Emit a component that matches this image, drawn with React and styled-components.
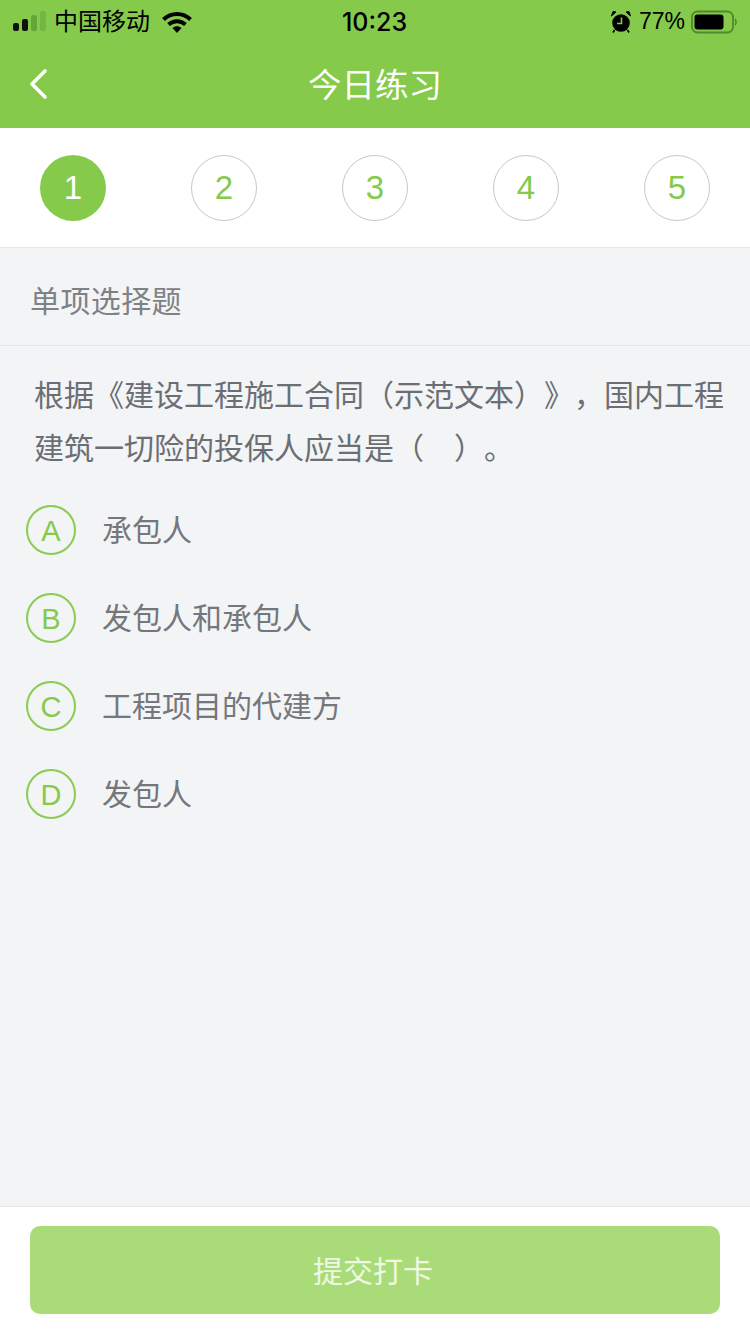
import React from 'react';
import styled, { createGlobalStyle } from 'styled-components';

const steps = [1, 2, 3, 4, 5];
const options = [
  { key: 'A', text: '承包人' },
  { key: 'B', text: '发包人和承包人' },
  { key: 'C', text: '工程项目的代建方' },
  { key: 'D', text: '发包人' },
];

const App = () => {
  return (
    <Page>
      <GlobalStyle />
      <Header>
        <StatusBar>
          <StatusLeft>
            <SignalIcon />
            <Carrier>中国移动</Carrier>
            <WifiIcon />
          </StatusLeft>
          <Clock>10:23</Clock>
          <StatusRight>
            <AlarmIcon />
            <Percent>77%</Percent>
            <BatteryIcon />
          </StatusRight>
        </StatusBar>
        <NavBar>
          <BackButton>
            <svg width="20" height="32" viewBox="0 0 20 32" fill="none">
              <path d="M17 3 L4 16 L17 29" stroke="#fff" strokeWidth="3.6" strokeLinecap="round" strokeLinejoin="round" />
            </svg>
          </BackButton>
          <Title>今日练习</Title>
        </NavBar>
      </Header>
      <Steps>
        {steps.map((n) => (
          <Step key={n} $active={n === 1}>{n}</Step>
        ))}
      </Steps>
      <SectionLabel>单项选择题</SectionLabel>
      <Question>根据《建设工程施工合同（示范文本）》，国内工程建筑一切险的投保人应当是（　）。</Question>
      <OptionList>
        {options.map((o) => (
          <Option key={o.key}>
            <OptionBadge>{o.key}</OptionBadge>
            <OptionText>{o.text}</OptionText>
          </Option>
        ))}
      </OptionList>
      <Footer>
        <SubmitButton>提交打卡</SubmitButton>
      </Footer>
    </Page>
  );
};

export default App;

const SignalIcon = () => (
  <svg width="36" height="22" viewBox="0 0 36 22">
    <rect x="1" y="12" width="6" height="8" rx="2" fill="#111" />
    <rect x="10" y="8" width="6" height="12" rx="2" fill="#111" />
    <rect x="19" y="4" width="6" height="16" rx="2" fill="#64a53b" />
    <rect x="28" y="0" width="6" height="20" rx="2" fill="#74b645" />
  </svg>
);

const WifiIcon = () => (
  <svg width="30" height="22" viewBox="0 0 30 22" fill="none">
    <path d="M1.5 8.5 C9 1 21 1 28.5 8.5" stroke="#000" strokeWidth="4" />
    <path d="M6.5 13.5 C11.5 9 18.5 9 23.5 13.5" stroke="#000" strokeWidth="4" />
    <path d="M10.5 17 C13.5 14.5 16.5 14.5 19.5 17 L15 22 Z" fill="#000" />
  </svg>
);

const AlarmIcon = () => (
  <svg width="20" height="22" viewBox="0 0 20 22">
    <circle cx="10" cy="12" r="8.8" fill="#000" />
    <path d="M10.5 6.5 V12.5 H6" stroke="#85ca4b" strokeWidth="1.6" fill="none" />
    <path d="M0.5 5 L5 1 L2 0.5 Z M19.5 5 L15 1 L18 0.5 Z" fill="#000" stroke="#000" />
    <path d="M3.5 19 L2 21.5 M16.5 19 L18 21.5" stroke="#000" strokeWidth="1.6" />
  </svg>
);

const BatteryIcon = () => (
  <svg width="46" height="24" viewBox="0 0 46 24" fill="none">
    <rect x="1" y="1.5" width="41" height="21" rx="5.5" stroke="#4f8a2a" strokeWidth="1.8" />
    <rect x="3.5" y="4.5" width="29" height="15" rx="3" fill="#000" />
    <path d="M44 9 C45.4 10 45.4 14 44 15" stroke="#4f8a2a" strokeWidth="1.6" />
  </svg>
);

// Styled Components

const GlobalStyle = createGlobalStyle`
  html, body {
    margin: 0;
    padding: 0;
    background: #f3f4f6;
  }
  * {
    box-sizing: border-box;
  }
`;

const Page = styled.div`
  width: 750px;
  height: 1334px;
  background-color: #f3f4f6;
  display: flex;
  flex-direction: column;
  overflow: hidden;
  font-family: "Liberation Sans", "Noto Sans CJK SC", sans-serif;
  text-spacing-trim: space-all;
`;

const Header = styled.header`
  background-color: #85ca4b;
  height: 128px;
  flex-shrink: 0;
`;

const StatusBar = styled.div`
  height: 40px;
  display: grid;
  grid-template-columns: 1fr auto 1fr;
  align-items: center;
  padding: 2px 13px 0 12px;
  color: #000;
`;

const StatusLeft = styled.div`
  display: flex;
  align-items: center;
  gap: 6px;
`;

const Carrier = styled.span`
  font-size: 24px;
  margin: 0 6px 4px 0;
`;

const Clock = styled.span`
  font-size: 25px;
  font-weight: 500;
  font-family: "Inter", "Liberation Sans", sans-serif;
`;

const StatusRight = styled.div`
  display: flex;
  align-items: center;
  justify-content: flex-end;
  gap: 8px;
`;

const Percent = styled.span`
  font-size: 23px;
  margin-right: -2px;
`;

const NavBar = styled.div`
  height: 88px;
  display: flex;
  align-items: center;
  justify-content: center;
  position: relative;
`;

const BackButton = styled.div`
  position: absolute;
  left: 28px;
  top: 28px;
  display: flex;
`;

const Title = styled.h1`
  margin: 0 0 4px 0;
  font-size: 33.5px;
  font-weight: 400;
  color: #fff;
`;

const Steps = styled.div`
  height: 120px;
  flex-shrink: 0;
  background-color: #fff;
  border-bottom: 1px solid #e6e6e6;
  display: flex;
  align-items: center;
  justify-content: space-between;
  padding: 0 40px;
`;

const Step = styled.div`
  width: 66px;
  height: 66px;
  border-radius: 50%;
  display: flex;
  align-items: center;
  justify-content: center;
  font-size: 33px;
  color: ${(p) => (p.$active ? '#fff' : '#85ca4b')};
  background-color: ${(p) => (p.$active ? '#85ca4b' : '#fff')};
  border: ${(p) => (p.$active ? 'none' : '1px solid #c8c8c8')};
`;

const SectionLabel = styled.div`
  height: 98px;
  flex-shrink: 0;
  padding: 4px 0 0 30px;
  display: flex;
  align-items: center;
  font-size: 30px;
  letter-spacing: 0.4px;
  color: #7e8185;
  border-bottom: 1px solid #e6e7ea;
`;

const Question = styled.p`
  margin: 0;
  padding: 23px 20px 0 34px;
  font-size: 30px;
  line-height: 53px;
  color: #6b6e72;
`;

const OptionList = styled.div`
  padding: 30px 0 0 26px;
  display: flex;
  flex-direction: column;
  gap: 38px;
`;

const Option = styled.div`
  display: flex;
  align-items: center;
  height: 50px;
`;

const OptionBadge = styled.div`
  width: 50px;
  height: 50px;
  border-radius: 50%;
  border: 2px solid #8acb50;
  color: #85ca4b;
  display: flex;
  align-items: center;
  justify-content: center;
  font-size: 29px;
  padding-top: 2px;
  margin-right: 26px;
`;

const OptionText = styled.span`
  font-size: 30px;
  color: #74777b;
  margin-top: -5px;
`;

const Footer = styled.footer`
  margin-top: auto;
  height: 128px;
  flex-shrink: 0;
  background-color: #fff;
  border-top: 1px solid #e6e6e6;
  padding: 19px 30px 0;
`;

const SubmitButton = styled.button`
  width: 100%;
  height: 88px;
  border: none;
  border-radius: 10px;
  background-color: #a9dc78;
  color: #eef8e4;
  font-family: inherit;
  font-size: 30px;
  padding: 0 4px 3px 0;
`;
